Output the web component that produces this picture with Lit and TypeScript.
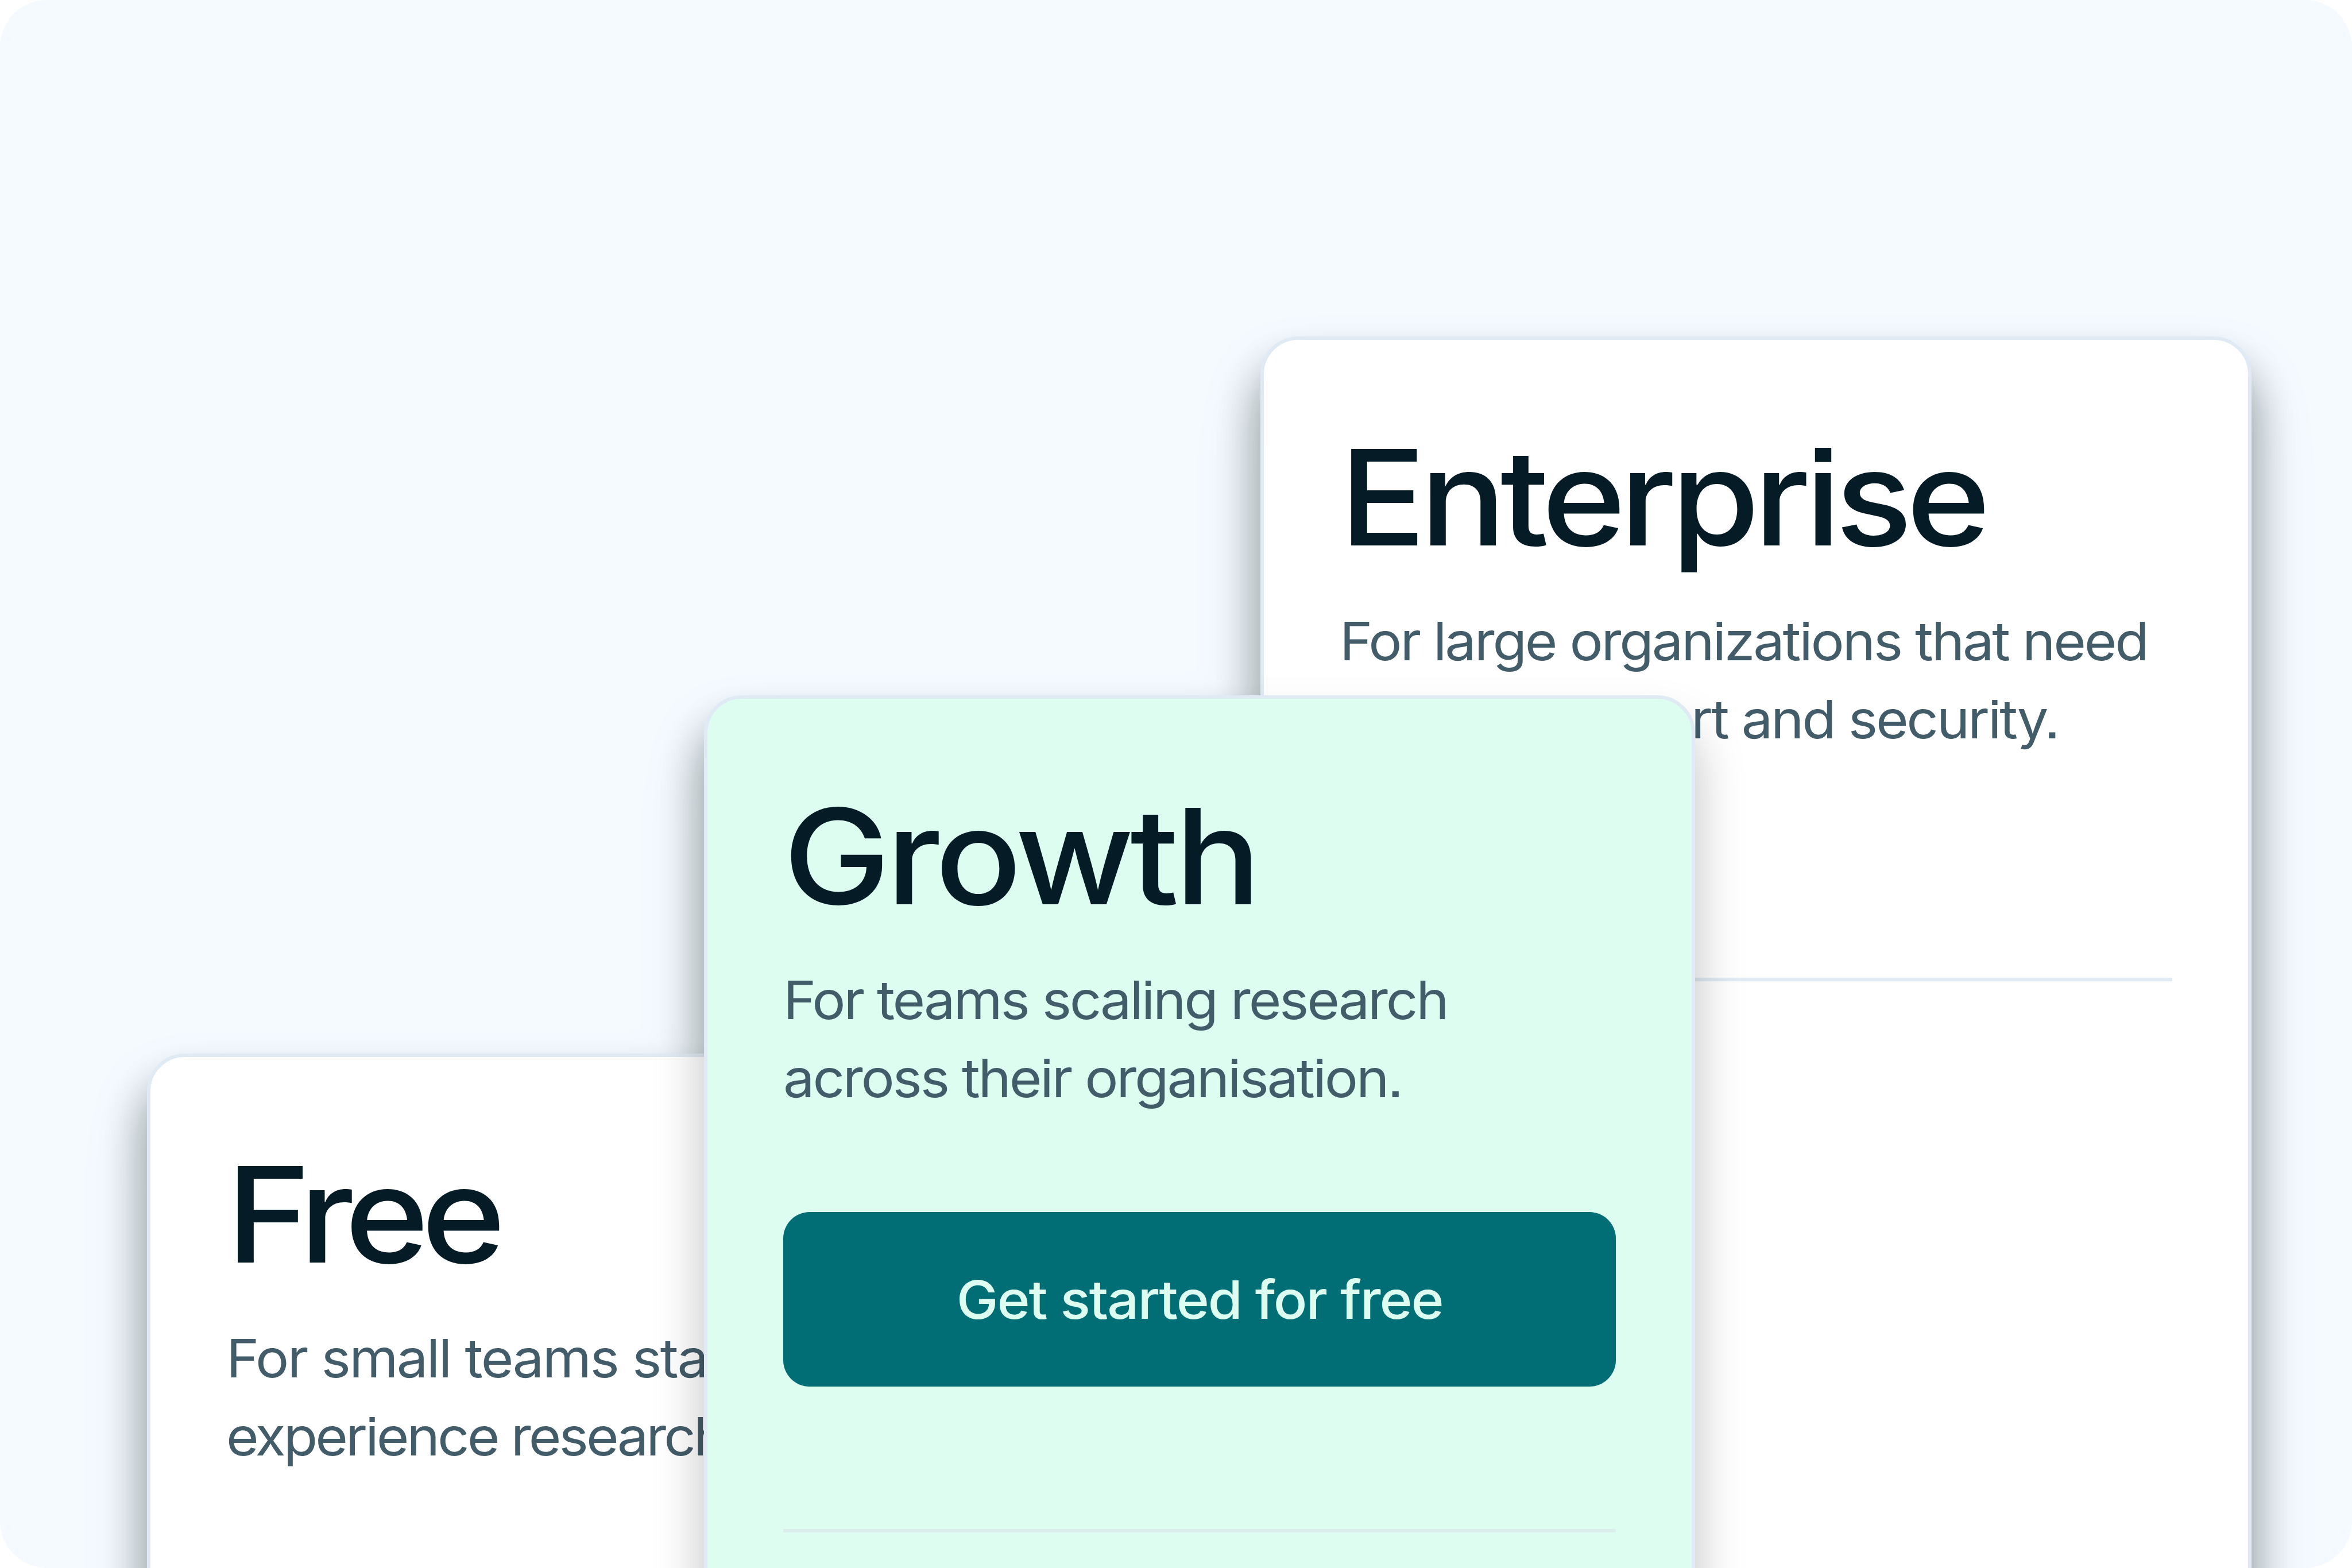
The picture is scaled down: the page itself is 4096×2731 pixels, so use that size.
import { html, css, LitElement, nothing } from 'lit';
import { customElement, property } from 'lit/decorators.js';

@customElement('plan-card')
export class PlanCard extends LitElement {
  @property() name = '';
  @property({ attribute: false }) lines: string[] = [];
  @property() action = '';

  static get styles() {
    return css`
      :host {
        display: flex;
        flex-direction: column;
        box-sizing: border-box;
        width: 1726px;
        height: 2500px;
        padding: 142px 132px 0;
        border: 6px solid #e0eaf4;
        border-radius: 66px;
        background-color: #ffffff;
        box-shadow: 0 56px 84px rgba(0, 0, 0, 0.25);
        font-family: Inter, "Liberation Sans", Arial, sans-serif;
        font-feature-settings: "ss07";
        font-optical-sizing: none;
      }

      .name {
        margin: 0;
        line-height: 264px;
        font-size: 231px;
        font-weight: 500;
        letter-spacing: var(--name-tracking, -9px);
        color: #051c27;
        white-space: nowrap;
        transform: scaleX(1.08);
        transform-origin: left;
      }

      .description {
        margin: 49.6px 0 0;
        line-height: 136.6px;
        font-size: 92.7px;
        font-weight: 400;
        letter-spacing: -3.1px;
        color: #435c69;
        white-space: nowrap;
        transform: scaleX(1.05);
        transform-origin: left;
      }

      .line {
        display: block;
      }

      .line:first-child {
        letter-spacing: var(--first-line-tracking, inherit);
      }

      .line:last-child {
        letter-spacing: var(--last-line-tracking, inherit);
      }

      .button {
        height: 304px;
        margin: 165.5px 0 0;
        border: 0;
        padding: 0;
        border-radius: 46px;
        background-color: #006e74;
        color: #dcfdf0;
        font-family: inherit;
        font-size: 92.7px;
        font-weight: 500;
        letter-spacing: -2px;
      }

      .label {
        display: inline-block;
        transform: scaleX(1.05);
      }

      .divider {
        height: 6px;
        margin-top: 382.7px;
        background-color: #e0ebf5;
      }

      .button + .divider {
        margin-top: 247.4px;
        background-color: #dcedee;
      }
    `;
  }

  render() {
    return html`
      <h2 class="name">${this.name}</h2>
      <p class="description">
        ${this.lines.map((line) => html`<span class="line">${line}</span>`)}
      </p>
      ${this.action
        ? html`<button class="button"><span class="label">${this.action}</span></button>`
        : nothing}
      <div class="divider"></div>
    `;
  }
}

@customElement('app-root')
export class AppRoot extends LitElement {
  static get styles() {
    return css`
      :host {
        display: block;
        width: 4096px;
        height: 2731px;
        background-color: #ffffff;
      }

      .stage {
        position: relative;
        width: 100%;
        height: 100%;
        overflow: hidden;
        border-radius: 82px;
        background-color: #f4faff;
      }

      /* one shadow under the whole stack, each card adds its own on top */
      .stack {
        position: absolute;
        inset: 0;
        filter: drop-shadow(0 56px 42px rgba(0, 35, 32, 0.25));
      }

      plan-card {
        position: absolute;
      }

      .free {
        left: 256px;
        top: 1835px;
        --name-tracking: -12px;
        --first-line-tracking: -2.5px;
        --last-line-tracking: -3.8px;
      }

      .enterprise {
        left: 2195px;
        top: 586px;
        --name-tracking: -9.6px;
      }

      .growth {
        left: 1226px;
        top: 1211px;
        background-color: #dcfdf0;
        --name-tracking: -6.4px;
      }
    `;
  }

  render() {
    return html`
      <div class="stage">
        <div class="stack">
          <plan-card
            class="free"
            name="Free"
            .lines=${['For small teams starting to', 'experience research.']}
          ></plan-card>
          <plan-card
            class="enterprise"
            name="Enterprise"
            .lines=${['For large organizations that need', 'tailored support and security.']}
          ></plan-card>
          <plan-card
            class="growth"
            name="Growth"
            action="Get started for free"
            .lines=${['For teams scaling research', 'across their organisation.']}
          ></plan-card>
        </div>
      </div>
    `;
  }
}
